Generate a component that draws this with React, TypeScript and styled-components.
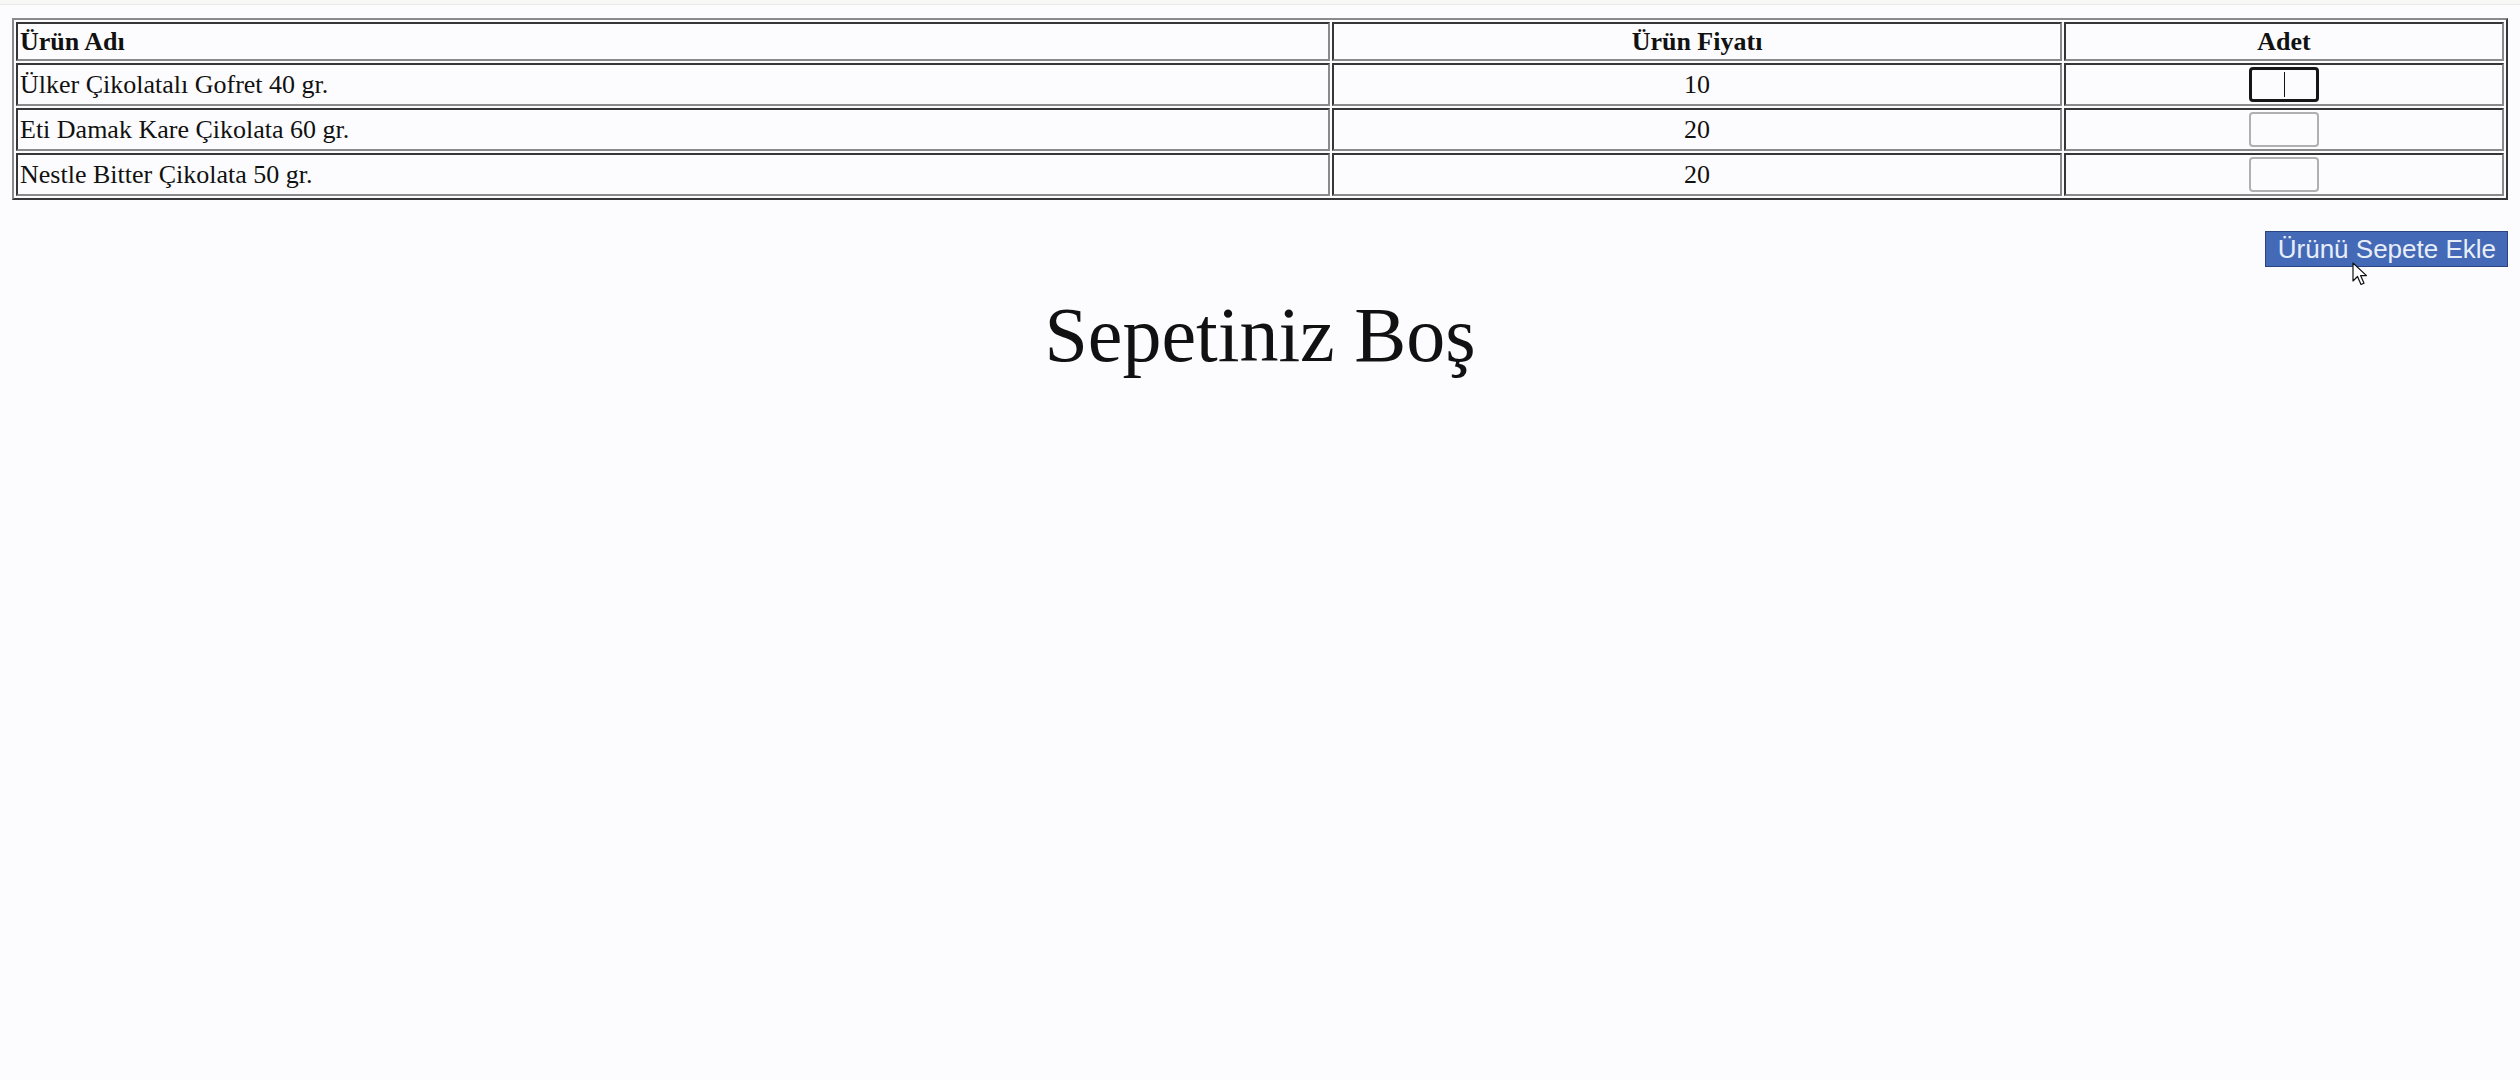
import styled, { createGlobalStyle } from 'styled-components';

const GlobalStyle = createGlobalStyle`
  html, body {
    margin: 0;
    background: #fcfcfe;
  }
  body {
    font-family: 'Liberation Serif', 'Times New Roman', serif;
    color: #111;
  }
`;

const TopStrip = styled.div`
  height: 4px;
  background: #f7f7f6;
  border-bottom: 1px solid #ebebe8;
`;

const Page = styled.div`
  padding: 13px 12px 0;
`;

const ProductTable = styled.table`
  width: 100%;
  table-layout: fixed;
  border: 2px outset #8a8a8a;
  border-spacing: 2px;
  font-size: 26px;
`;

const Cell = styled.td<{ $align?: string; $width?: string; $height?: number }>`
  box-sizing: border-box;
  height: ${(props) => props.$height || 43}px;
  padding: 1px 2px;
  border: 2px inset #8a8a8a;
  text-align: ${(props) => props.$align || 'left'};
  vertical-align: middle;
  width: ${(props) => props.$width || 'auto'};
`;

const HeadCell = styled(Cell).attrs({ as: 'th' })`
  font-weight: 700;
`;

const QtyBox = styled.span`
  position: relative;
  display: inline-block;
  vertical-align: middle;
`;

const QtyInput = styled.input<{ $focused?: boolean }>`
  box-sizing: border-box;
  display: block;
  width: 70px;
  height: 35px;
  margin: 0;
  padding: 0;
  background: #fcfcfe;
  text-align: center;
  border-radius: 4px;
  outline: none;
  border: ${(props) => (props.$focused ? '3px solid #161616' : '2px solid #b0b0b0')};
`;

const Caret = styled.span`
  position: absolute;
  left: 35px;
  top: 5px;
  width: 1px;
  height: 25px;
  background: #111;
`;

const Actions = styled.div`
  display: flex;
  justify-content: flex-end;
  margin-top: 31px;
`;

const ButtonWrap = styled.div`
  position: relative;
`;

const AddButton = styled.button`
  box-sizing: border-box;
  height: 36px;
  padding: 0 11px 0 12px;
  background: #4469b6;
  border: 1px solid #2b4583;
  color: #e8eef8;
  font-family: 'Liberation Sans', Arial, sans-serif;
  font-size: 26px;
  line-height: 1;
  cursor: pointer;
`;

const Pointer = styled.svg`
  position: absolute;
  left: 87px;
  top: 31px;
  pointer-events: none;
`;

const EmptyTitle = styled.h1`
  margin: 23px 0 0;
  text-align: center;
  font-size: 78px;
  font-weight: 400;
  line-height: 1.15;
`;

const products = [
  { name: 'Ülker Çikolatalı Gofret 40 gr.', price: 10 },
  { name: 'Eti Damak Kare Çikolata 60 gr.', price: 20 },
  { name: 'Nestle Bitter Çikolata 50 gr.', price: 20 },
];

const App = () => {
  return (
    <>
      <GlobalStyle />
      <TopStrip />
      <Page>
        <ProductTable>
          <thead>
            <tr>
              <HeadCell $width="1314px" $height={39}>
                Ürün Adı
              </HeadCell>
              <HeadCell $width="730px" $height={39} $align="center">
                Ürün Fiyatı
              </HeadCell>
              <HeadCell $height={39} $align="center">
                Adet
              </HeadCell>
            </tr>
          </thead>
          <tbody>
            {products.map((p, i) => (
              <tr key={p.name}>
                <Cell>{p.name}</Cell>
                <Cell $align="center">{p.price}</Cell>
                <Cell $align="center">
                  <QtyBox>
                    <QtyInput type="text" $focused={i === 0} readOnly />
                    {i === 0 && <Caret />}
                  </QtyBox>
                </Cell>
              </tr>
            ))}
          </tbody>
        </ProductTable>
        <Actions>
          <ButtonWrap>
            <AddButton>Ürünü Sepete Ekle</AddButton>
            <Pointer width="17" height="25" viewBox="0 0 17 25">
              <path
                d="M1 1 L1 19 L5.5 14.5 L9 22.5 L12 21.2 L8.6 13.6 L14.5 13.6 Z"
                fill="#fff"
                stroke="#111"
                strokeWidth="1.2"
                strokeLinejoin="round"
              />
            </Pointer>
          </ButtonWrap>
        </Actions>
        <EmptyTitle>Sepetiniz Boş</EmptyTitle>
      </Page>
    </>
  );
};

export default App;
